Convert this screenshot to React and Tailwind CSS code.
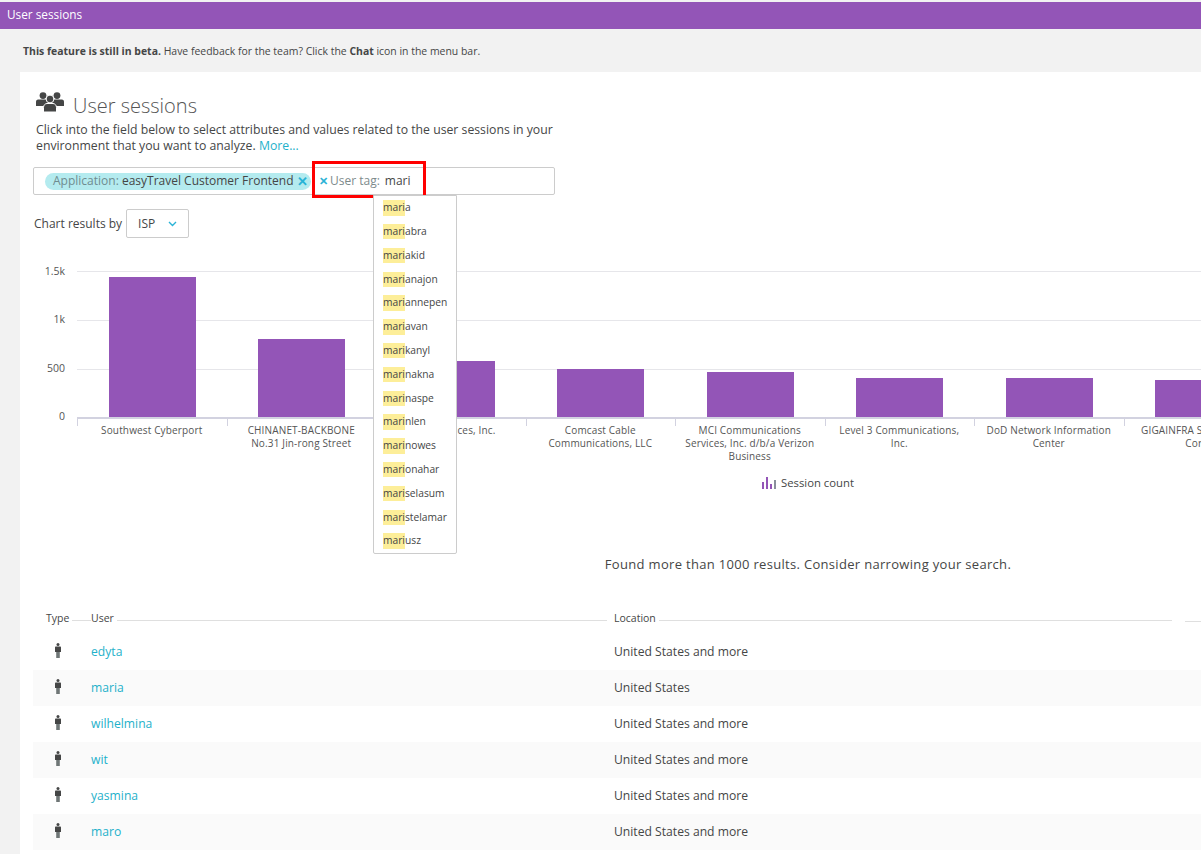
import React from "react";

const bars = [
  { height: 140, label: ["Southwest Cyberport"] },
  { height: 78, label: ["CHINANET-BACKBONE", "No.31 Jin-rong Street"] },
  { height: 56, label: ["AT&T Services, Inc."] },
  { height: 48, label: ["Comcast Cable", "Communications, LLC"] },
  { height: 45, label: ["MCI Communications", "Services, Inc. d/b/a Verizon", "Business"] },
  { height: 39, label: ["Level 3 Communications,", "Inc."] },
  { height: 39, label: ["DoD Network Information", "Center"] },
  { height: 37, label: ["GIGAINFRA Softbank BB", "Corp."] },
];

const suggestions = [
  ["mari", "a"],
  ["mari", "abra"],
  ["mari", "akid"],
  ["mari", "anajon"],
  ["mari", "annepen"],
  ["mari", "avan"],
  ["mari", "kanyl"],
  ["mari", "nakna"],
  ["mari", "naspe"],
  ["mari", "nlen"],
  ["mari", "nowes"],
  ["mari", "onahar"],
  ["mari", "selasum"],
  ["mari", "stelamar"],
  ["mari", "usz"],
];

const sessions = [
  { user: "edyta", location: "United States and more" },
  { user: "maria", location: "United States" },
  { user: "wilhelmina", location: "United States and more" },
  { user: "wit", location: "United States and more" },
  { user: "yasmina", location: "United States and more" },
  { user: "maro", location: "United States and more" },
];

const UsersIcon = () => (
  <svg width="28" height="20" viewBox="0 0 28 20" fill="#454646">
    <circle cx="7" cy="3.6" r="3.4" />
    <circle cx="21" cy="3.6" r="3.4" />
    <path d="M0 14V9.5C0 8 1.5 7.5 3 7.5H11C12.5 7.5 14 8 14 9.5V14Z" />
    <path d="M14 14V9.5C14 8 15.5 7.5 17 7.5H25C26.5 7.5 28 8 28 9.5V14Z" />
    <circle cx="14" cy="7" r="3.9" stroke="#fff" strokeWidth="1" />
    <path d="M7.5 20V15.5C7.5 13.2 9.2 11.5 11 11.5H17C18.8 11.5 20.5 13.2 20.5 15.5V20Z" stroke="#fff" strokeWidth="1" />
  </svg>
);

const PersonIcon = () => (
  <svg width="6" height="15" viewBox="0 0 6 15">
    <circle cx="3" cy="1.5" r="1.5" fill="#454646" />
    <path d="M1 3.5H5C5.6 3.5 6 3.9 6 4.5V9H0V4.5C0 3.9 .4 3.5 1 3.5Z" fill="#454646" />
    <path d="M1.2 9H4.8V15H1.2Z" fill="#6f7676" />
  </svg>
);

const LegendIcon = () => (
  <svg width="14" height="12" viewBox="0 0 14 12" fill="#9355b7">
    <rect x="0" y="5" width="2" height="7" />
    <rect x="4" y="0" width="2" height="12" />
    <rect x="8" y="7" width="2" height="5" />
    <rect x="12" y="3" width="2" height="9" fill="#8a8f9c" />
  </svg>
);

const HeaderCell = ({ className, children }) => (
  <div className={`flex items-center gap-[3px] ${className}`}>
    <span>{children}</span>
    <div className="mt-[3px] h-px flex-1 bg-[#dfdfdf]"></div>
  </div>
);

const App = () => {
  return (
    <div className="h-[854px] w-[1201px] overflow-hidden bg-[#f2f2f2] pt-[2px] font-['Open_Sans','Liberation_Sans',sans-serif] text-[#454646]">
      <header className="flex h-[27px] items-center bg-[#9355b7] pb-[2px] pl-[7px] text-[11.8px] text-white">
        User sessions
      </header>
      <p className="flex h-[43px] items-center pt-[2px] pl-[23px] text-[10.45px]">
        <span>
          <b className="font-bold">This feature is still in beta.</b> Have feedback for the team? Click the{" "}
          <b className="font-bold">Chat</b> icon in the menu bar.
        </span>
      </p>

      <main className="ml-[20px] h-[782px] w-[1181px] bg-white pl-[13px]">
        <div className="flex h-[47px] items-end pl-[3px]">
          <div className="mb-[7px]">
            <UsersIcon />
          </div>
          <h1 className="ml-[9px] text-[20px] leading-[26px] font-light text-[#555]">User sessions</h1>
        </div>
        <p className="mt-[3px] w-[530px] pl-[3px] text-[12.25px] leading-4">
          Click into the field below to select attributes and values related to the user sessions in your environment
          that you want to analyze. <span className="text-[#1fb1ca]">More...</span>
        </p>

        <div className="relative mt-[13px] flex h-[28px] w-[522px] items-center rounded-[2px] border border-[#ccc] pl-[11px] text-[12px]">
          <div className="flex h-[17px] w-[266px] items-center justify-between rounded-full bg-[#b4ebef] pr-[3px] pl-[8px]">
            <span>
              <span className="text-[#6f8c90]">Application:</span> easyTravel Customer Frontend
            </span>
            <span className="text-[13px] leading-none font-bold text-[#2ab3d6]">✕</span>
          </div>
          <span className="ml-[8px] text-[11px] font-bold text-[#2ab3d6]">✕</span>
          <span className="ml-[2px] text-[#7d8a8c]">User tag:</span>
          <span className="ml-[5px]">mari</span>

          <div className="absolute top-[-7px] left-[278px] h-[37px] w-[114px] border-[3px] border-[#f00]"></div>

          <div className="absolute top-[27px] left-[339px] z-10 w-[84px] rounded-b-[2px] border border-[#ccc] bg-white pl-[9px]">
            {suggestions.map(([match, rest]) => (
              <div key={match + rest} className="flex h-[23.8px] items-center text-[10.25px]">
                <span className="bg-[#fdee99]">{match}</span>
                <span>{rest}</span>
              </div>
            ))}
          </div>
        </div>

        <div className="mt-[14px] flex items-center pl-[1px] text-[12px]">
          <span>Chart results by</span>
          <div className="ml-[4px] flex h-[29px] w-[63px] items-center justify-between rounded-[2px] border border-[#ccc] pr-[11px] pl-[11px]">
            <span>ISP</span>
            <svg width="9" height="6" viewBox="0 0 9 6" fill="none" stroke="#2ab3d6" strokeWidth="1.4">
              <path d="M1 1L4.5 4.5L8 1" />
            </svg>
          </div>
        </div>

        <div className="mt-[26px] flex">
          <div className="flex h-[159px] w-[32px] shrink-0 flex-col items-end justify-between text-[10.5px] leading-[14px] text-[#555]">
            <span>1.5k</span>
            <span>1k</span>
            <span>500</span>
            <span>0</span>
          </div>
          <div className="ml-[12px] min-w-0 flex-1">
            <div className="relative mt-[7px] h-[148px] border-b-2 border-[#d2d2e0]">
              <div className="absolute inset-x-0 top-0 flex h-[99px] flex-col justify-between">
                <div className="h-px bg-[#e6e6ea]"></div>
                <div className="h-px bg-[#e6e6ea]"></div>
                <div className="h-px bg-[#e6e6ea]"></div>
              </div>
              <div className="relative flex h-full">
                {bars.map((bar) => (
                  <div key={bar.label[0]} className="flex h-full w-[149.5px] shrink-0 items-end justify-center pl-[0.5px]">
                    <div className="w-[87px] bg-[#9355b7]" style={{ height: bar.height }}></div>
                  </div>
                ))}
              </div>
            </div>
            <div className="flex">
              {bars.map((bar) => (
                <div
                  key={bar.label[0]}
                  className="h-[50px] w-[149.5px] shrink-0 text-center text-[10px] leading-[13px] tracking-[0.15px] whitespace-nowrap text-[#555]"
                >
                  <div className="h-[7px] w-px bg-[#d2d2e0]"></div>
                  <div className="-mt-[2px]">
                    {bar.label.map((line) => (
                      <div key={line}>{line}</div>
                    ))}
                  </div>
                </div>
              ))}
            </div>
          </div>
        </div>

        <div className="mt-[7px] flex h-[14px] w-[1550px] items-center justify-center gap-[5px] text-[11.3px]">
          <LegendIcon />
          <span>Session count</span>
        </div>

        <p className="mt-[64px] w-[1550px] text-center text-[13px] leading-[20px] tracking-[0.315px]">
          Found more than 1000 results. Consider narrowing your search.
        </p>

        <div className="mt-[37px] flex h-[16px] text-[10.5px]">
          <HeaderCell className="ml-[13px] w-[45px]">Type</HeaderCell>
          <HeaderCell className="w-[516px]">User</HeaderCell>
          <HeaderCell className="ml-[7px] w-[558px]">Location</HeaderCell>
          <div className="mt-[10px] ml-[13px] h-px flex-1 bg-[#dfdfdf]"></div>
        </div>

        <div className="mt-[7px]">
          {sessions.map((session) => (
            <div key={session.user} className="flex h-9 items-center text-[12.15px] even:bg-[#fafafa]">
              <div className="-mt-[3px] flex w-[58px] justify-center pr-[8px]">
                <PersonIcon />
              </div>
              <div className="w-[523px] text-[#1fb1ca]">{session.user}</div>
              <div>{session.location}</div>
            </div>
          ))}
        </div>
      </main>
    </div>
  );
};

export default App;
